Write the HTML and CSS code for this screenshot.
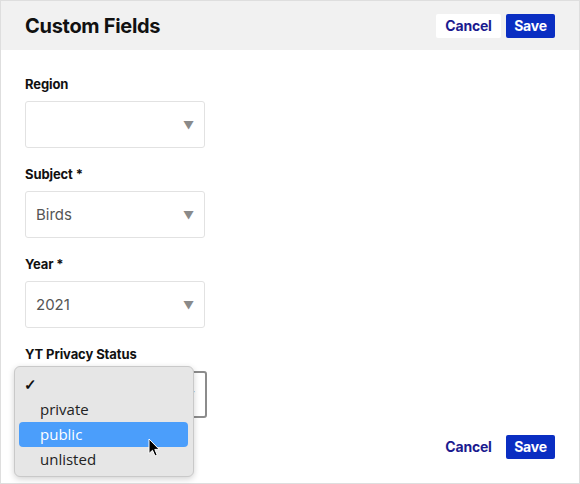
FILE: index.html
```html
<!DOCTYPE html>
<html>
<head>
<meta charset="utf-8">
<link rel="stylesheet" href="styles.css">
</head>
<body>
<div class="panel">
  <header class="header">
    <h1 class="title">Custom Fields</h1>
    <div class="actions">
      <button class="btn btn-cancel btn-cancel-top">Cancel</button>
      <button class="btn btn-save">Save</button>
    </div>
  </header>
  <div class="form">
    <div class="field">
      <div class="label">Region</div>
      <div class="select"><span class="value"></span><span class="arrow">▼</span></div>
    </div>
    <div class="field">
      <div class="label">Subject *</div>
      <div class="select"><span class="value">Birds</span><span class="arrow">▼</span></div>
    </div>
    <div class="field">
      <div class="label">Year *</div>
      <div class="select"><span class="value">2021</span><span class="arrow">▼</span></div>
    </div>
    <div class="field field-last">
      <div class="label">YT Privacy Status</div>
      <div class="select select-open"><span class="value"></span><span class="arrow">▼</span>
        <div class="menu">
          <div class="item"><span class="check">✓</span></div>
          <div class="item">private</div>
          <div class="item item-active">public</div>
          <div class="item">unlisted</div>
          <svg class="cursor" width="12" height="19" viewBox="0 0 12 19">
            <path d="M1 1 L1 15.5 L4.5 12.3 L7 18 L9.2 17 L6.8 11.4 L11.2 11.4 Z" fill="#000" stroke="#fff" stroke-width="1" stroke-linejoin="round"/>
          </svg>
        </div>
      </div>
    </div>
    <div class="footer">
      <button class="btn btn-cancel">Cancel</button>
      <button class="btn btn-save">Save</button>
    </div>
  </div>
</div>
</body>
</html>
```
FILE: styles.css
```css
* { box-sizing: border-box; }
html, body { margin: 0; padding: 0; background: #fff; }
body { font-family: Inter, Roboto, "Liberation Sans", Arial, sans-serif; color: #111; }

.panel {
  width: 580px;
  height: 484px;
  border: 1px solid #dedede;
  background: #fff;
  position: relative;
}

.header {
  height: 49px;
  background: #f1f1f1;
  display: flex;
  align-items: center;
  justify-content: space-between;
  padding: 0 24px 0 24px;
}
.title {
  margin: 0;
  font-size: 20px;
  font-weight: 700;
  letter-spacing: -0.3px;
  color: #111;
}
.actions { display: flex; gap: 5px; margin-top: 1px; }

.btn {
  font-family: Inter, Roboto, "Liberation Sans", Arial, sans-serif;
  font-size: 14px;
  font-weight: 700;
  border: none;
  border-radius: 2px;
  height: 24px;
  padding: 0;
  cursor: pointer;
  line-height: 24px;
  letter-spacing: -0.2px;
}
.btn-cancel { background: transparent; color: #1b1b8f; width: 65px; }
.btn-cancel-top { background: #fff; }
.btn-save { background: #0a2ec2; color: #fff; width: 49px; }

.form { padding: 26px 24px 0 24px; }
.field { margin-bottom: 18px; }
.field-last { margin-bottom: 17px; }
.label {
  font-size: 13px;
  font-weight: 700;
  line-height: 16px;
  margin-bottom: 9px;
  color: #111;
  letter-spacing: -0.1px;
}
.select {
  width: 180px;
  height: 47px;
  border: 1px solid #e2e2e2;
  border-radius: 3px;
  display: flex;
  align-items: center;
  justify-content: space-between;
  padding: 0 10px 0 10px;
  position: relative;
}
.value { font-size: 15px; color: #555; }
.arrow { font-size: 11px; color: #8a8a8a; }
.select-open {
  width: 183px;
  border: 2px solid #8c8c8c;
  margin-left: -1px;
}

.menu {
  position: absolute;
  left: -12px;
  top: -7px;
  width: 180px;
  height: 111px;
  background: #e6e6e6;
  border: 1px solid #c9c9c9;
  border-radius: 6px;
  box-shadow: 0 2px 6px rgba(0,0,0,0.18);
  padding: 6px 5px 6px 5px;
  font-family: "Open Sans", Roboto, "Liberation Sans", sans-serif;
}
.item {
  height: 25px;
  line-height: 25px;
  font-size: 15px;
  color: #222;
  padding-left: 21px;
  border-radius: 4px;
  position: relative;
  margin-left: -1px;
}
.item:first-child { height: 24px; }
.check {
  position: absolute;
  left: 5px;
  top: -1px;
  font-size: 15px;
  font-weight: 700;
  color: #111;
}
.item-active { background: #4b9efb; color: #fff; }
.cursor { position: absolute; left: 133px; top: 71px; }

.footer {
  display: flex;
  justify-content: flex-end;
  gap: 5px;
}
```
